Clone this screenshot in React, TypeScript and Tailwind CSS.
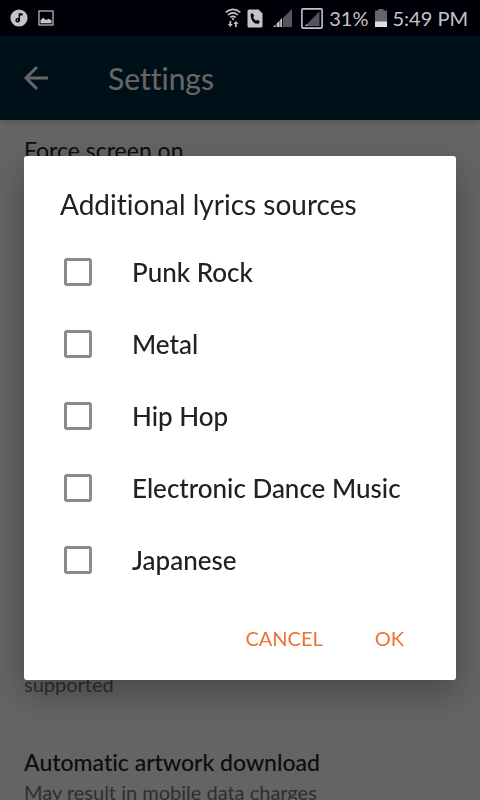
import { useState } from "react";

const sources = ["Punk Rock", "Metal", "Hip Hop", "Electronic Dance Music", "Japanese"];

function StatusBar() {
  return (
    <header className="relative z-30 flex h-9 shrink-0 items-center justify-between bg-[#000009] pr-3 pl-2.5 text-[#c4c4c4]">
      <div className="flex items-center gap-2.5">
        <svg className="size-[18px]" viewBox="0 0 18 18" aria-hidden="true">
          <circle cx="9" cy="9" r="8.6" fill="currentColor" />
          <circle cx="7.7" cy="11.2" r="2.3" fill="#000009" />
          <path d="M8.6 4.2h4v2.3h-2.6v5H8.6z" fill="#000009" />
          <circle cx="7.5" cy="11.2" r="0.7" fill="currentColor" />
        </svg>
        <svg className="size-4" viewBox="0 0 16 16" aria-hidden="true">
          <rect x="1" y="1" width="14" height="14" fill="none" stroke="currentColor" strokeWidth="1.2" />
          <path d="M2.5 13.2V10l1.7-1.2 1 -1.3 1.3 1.4 1.5 1 1.5-.6 1.5-.6 1 1.1 1.5.3v3.1z" fill="currentColor" />
        </svg>
      </div>

      <div className="flex items-center gap-1.5">
        <svg className="h-5 w-4" viewBox="0 0 16 20" fill="none" stroke="currentColor" aria-hidden="true">
          <path d="M0.7 4.4Q8 -1.8 15.3 4.4M3 7Q8 2.6 13 7M5.3 9.4Q8 7.2 10.7 9.4" strokeWidth="1.6" />
          <circle cx="8" cy="11" r="1.1" fill="currentColor" stroke="none" />
          <path
            d="M4.5 13v3H2.8L5.3 19l2.5-3H6.2v-3zM10 19v-3H8.4l2.5-3 2.5 3h-1.7v3z"
            fill="currentColor"
            stroke="none"
          />
        </svg>
        <svg className="mr-1 h-[19px] w-4" viewBox="0 0 16 19" aria-hidden="true">
          <path d="M2 0.5h9.5L15.5 4.5V17q0 1.5-1.5 1.5H2Q0.5 18.5 0.5 17V2Q0.5 0.5 2 0.5z" fill="currentColor" />
          <path
            d="M3.5 5.2l2-1.3 1.8 3-1.3 1.2q.9 2.5 3 3.7l1.4-1.1 2.6 2-1.5 2Q4.2 15.5 3.5 5.2z"
            fill="#000009"
          />
        </svg>
        <svg className="h-5 w-[22px]" viewBox="0 0 22 20" aria-hidden="true">
          <path d="M10 10L19 1v18h-9z" fill="#55555f" />
          <path d="M0 19l2.6-2.4V19zM3.6 15.4l3-3V19h-3zM7.2 11.8l1.8-1.8V19H7.2z" fill="currentColor" />
        </svg>
        <svg className="h-[21px] w-[22px]" viewBox="0 0 22 21" aria-hidden="true">
          <rect x="0.9" y="0.9" width="20.2" height="19.2" rx="1.2" fill="none" stroke="currentColor" strokeWidth="1.6" />
          <path d="M7 15L18.5 3.5V18H7z" fill="#55555f" />
          <path d="M4 18l2.6-2.6V18z" fill="currentColor" />
        </svg>
        <span className="text-xl">31%</span>
        <svg className="h-[18px] w-3" viewBox="0 0 12 18" aria-hidden="true">
          <path d="M3.5 0h5v1.5H12V13H0V1.5h3.5z" fill="#66666a" />
          <path d="M0 12.5h12V18H0z" fill="#dedede" />
        </svg>
        <span className="text-xl">5:49 PM</span>
      </div>
    </header>
  );
}

function SourcesDialog() {
  const [selected, setSelected] = useState<string[]>([]);

  function toggle(source: string) {
    setSelected((current) =>
      current.includes(source) ? current.filter((item) => item !== source) : [...current, source]
    );
  }

  return (
    <div className="fixed inset-0 z-20 flex items-center justify-center bg-black/60 px-6 pt-9">
      <div
        role="dialog"
        aria-modal="true"
        aria-labelledby="sources-title"
        className="w-full rounded-[3px] bg-white text-[#212121] shadow-[0_14px_36px_rgba(0,0,0,0.3)]"
      >
        <h2 id="sources-title" className="px-9 pt-8 pb-4 text-[28px] leading-8">
          Additional lyrics sources
        </h2>
        <ul>
          {sources.map((source) => (
            <li key={source}>
              <label className="flex h-18 items-center gap-10 px-10 text-[26px] font-medium">
                <input
                  type="checkbox"
                  checked={selected.includes(source)}
                  onChange={() => toggle(source)}
                  className="size-7 shrink-0 appearance-none rounded-[3px] border-3 border-[#8a8a8a] checked:bg-[#ee7033]"
                />
                {source}
              </label>
            </li>
          ))}
        </ul>
        <div className="flex justify-end gap-6 px-10 py-[18px] text-xl text-[#ee7033]">
          <button type="button" className="h-12 px-4">
            CANCEL
          </button>
          <button type="button" className="h-12 px-3">
            OK
          </button>
        </div>
      </div>
    </div>
  );
}

export default function App() {
  return (
    <div className="flex h-screen flex-col overflow-hidden bg-[#fafafa] font-[Lato,sans-serif] [font-variant-ligatures:none]">
      <StatusBar />
      <nav className="z-10 flex h-21 shrink-0 items-center gap-14 bg-[#00283c] px-5 text-white shadow-md">
        <button type="button" aria-label="Back">
          <svg className="size-8" viewBox="0 0 32 32" fill="none" stroke="currentColor" strokeWidth="3" aria-hidden="true">
            <path d="M28 16H6M17 5L6 16l11 11" />
          </svg>
        </button>
        <h1 className="text-3xl">Settings</h1>
      </nav>
      <main className="flex grow flex-col justify-between px-6 pt-3.5">
        <p className="text-[23px] leading-8 text-[#212121]">Force screen on</p>
        <div>
          <p className="text-xl text-[#757575]">supported</p>
          <div className="-mb-1.5 pt-12">
            <p className="text-[23px] leading-8 font-medium text-[#212121]">Automatic artwork download</p>
            <p className="text-xl text-[#757575]">May result in mobile data charges</p>
          </div>
        </div>
      </main>
      <SourcesDialog />
    </div>
  );
}
